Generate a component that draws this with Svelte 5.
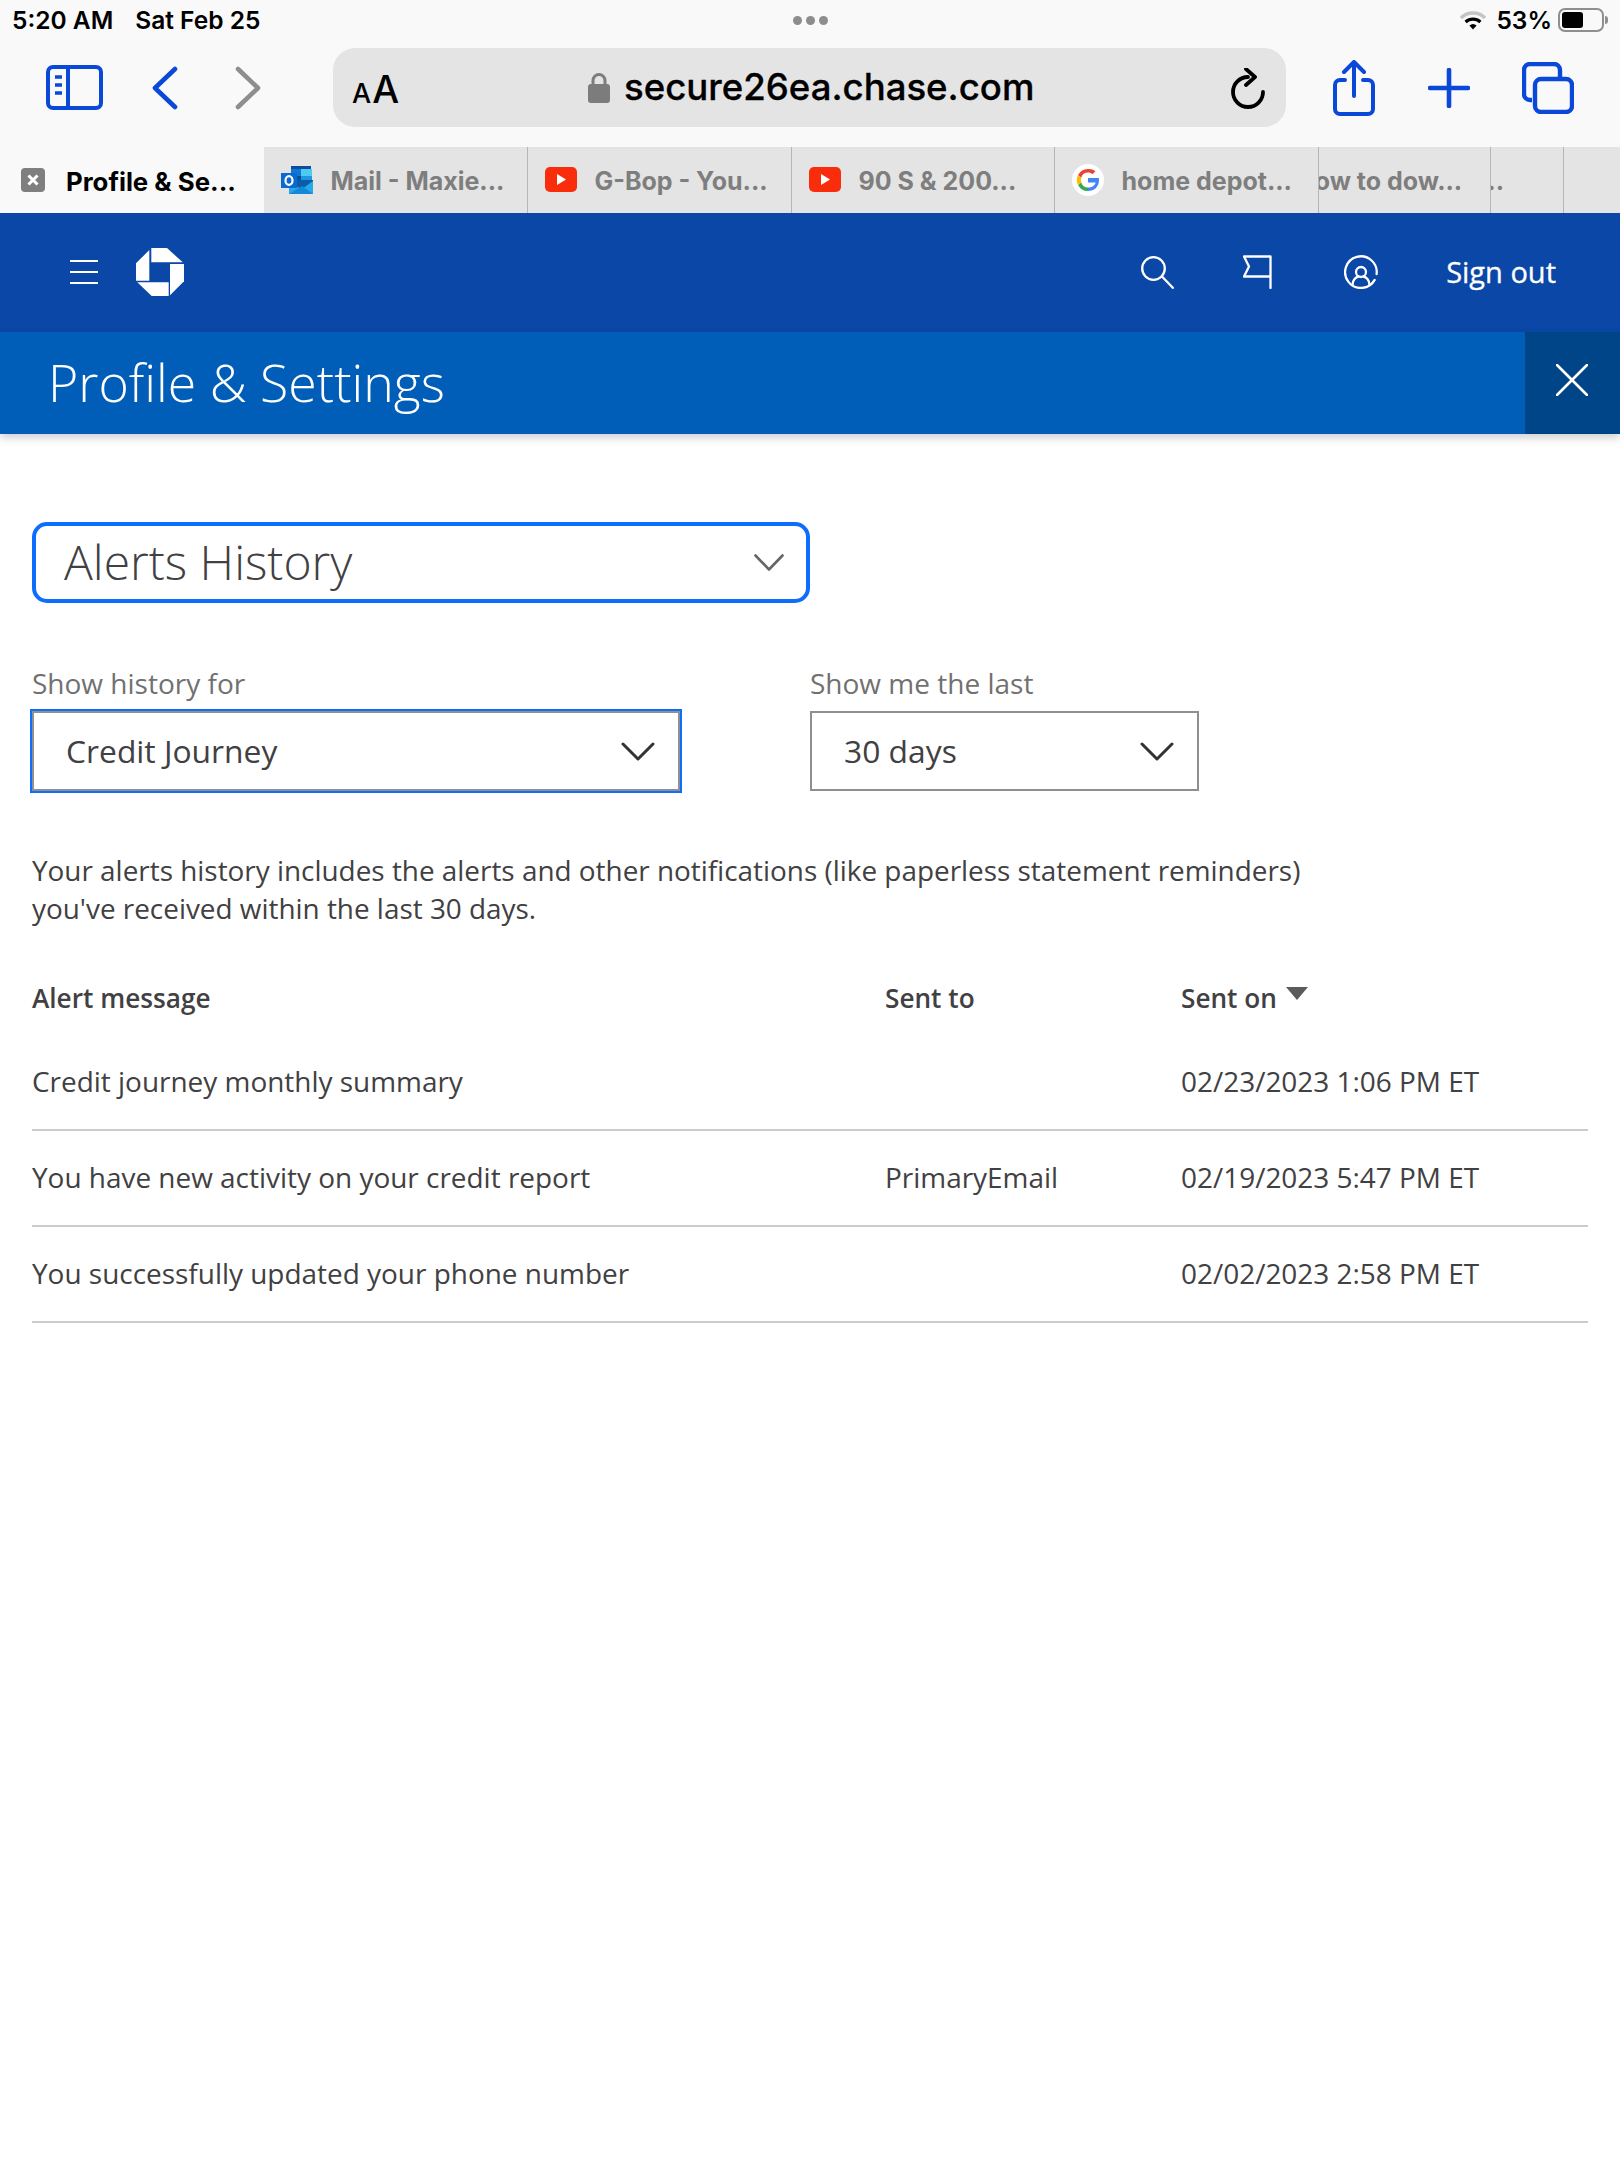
<script>
  const tabs = [
    { t: 'Mail - Maxie...', icon: 'outlook', w: 264 },
    { t: 'G-Bop - You...', icon: 'yt', w: 264 },
    { t: '90 S & 200...', icon: 'yt', w: 263 },
    { t: 'home depot...', icon: 'g', w: 264 },
  ];
  const rows = [
    ['Credit journey monthly summary', '', '02/23/2023 1:06 PM ET'],
    ['You have new activity on your credit report', 'PrimaryEmail', '02/19/2023 5:47 PM ET'],
    ['You successfully updated your phone number', '', '02/02/2023 2:58 PM ET'],
  ];
</script>

<div class="page">
  <div class="chrome">
    <div class="status">
      <span class="time">5:20 AM</span><span class="date">Sat Feb 25</span>
      <div class="dots"><i></i><i></i><i></i></div>
      <svg class="wifi" width="28" height="20" viewBox="0 0 28 20">
        <path d="M2 8a17 17 0 0 1 24 0" fill="none" stroke="#c4c4c4" stroke-width="3.4"/>
        <path d="M6.6 12a11 11 0 0 1 14.8 0" fill="none" stroke="#000" stroke-width="3.2"/>
        <path d="M10.4 15.6a5.4 5.4 0 0 1 7.2 0L14 19.6z" fill="#000"/>
      </svg>
      <span class="pct">53%</span>
      <div class="batt"><b></b></div><div class="nub"></div>
    </div>
    <div class="toolbar">
      <svg class="i-side" width="57" height="45" viewBox="0 0 57 45" fill="none" stroke="#0a49d8" stroke-width="4">
        <rect x="2" y="2" width="53" height="41" rx="5"/><path d="M22 2v41"/>
        <path d="M9 12h7M9 20h7M9 28h7" stroke-width="3.4"/>
      </svg>
      <svg class="i-back" width="26" height="44" viewBox="0 0 26 44" fill="none" stroke="#0a49d8" stroke-width="4.6" stroke-linecap="round" stroke-linejoin="round"><path d="M23 3 3 22l20 19"/></svg>
      <svg class="i-fwd" width="26" height="44" viewBox="0 0 26 44" fill="none" stroke="#8e8e8e" stroke-width="4.6" stroke-linecap="round" stroke-linejoin="round"><path d="m3 3 20 19L3 41"/></svg>
      <div class="url">
        <span class="aa"><small>A</small>A</span>
        <svg class="lock" width="22" height="30" viewBox="0 0 22 30"><rect x="0" y="11" width="22" height="19" rx="3" fill="#7c7c7c"/><path d="M5 12V7.500a6 6 0 0 1 12 0V12" fill="none" stroke="#7c7c7c" stroke-width="3"/></svg>
        <span class="host">secure26ea.chase.com</span>
        <svg class="reload" width="36" height="42" viewBox="0 0 36 42" fill="none" stroke="#000" stroke-width="3.8" stroke-linecap="round" stroke-linejoin="round"><path d="M17 9A15 15 0 1 0 32 24"/><path d="m15 1 9 8-9 8"/></svg>
      </div>
      <svg class="i-share" width="44" height="56" viewBox="0 0 44 56" fill="none" stroke="#0a49d8" stroke-width="4" stroke-linecap="round" stroke-linejoin="round"><path d="M13 20H8a5 5 0 0 0-5 5v24a5 5 0 0 0 5 5h28a5 5 0 0 0 5-5V25a5 5 0 0 0-5-5h-5"/><path d="M22 36V3M12 12l10-10 10 10"/></svg>
      <svg class="i-plus" width="42" height="40" viewBox="0 0 42 40" fill="none" stroke="#0a49d8" stroke-width="4.600" stroke-linecap="round"><path d="M21 2v36M2 20h38"/></svg>
      <svg class="i-tabs" width="52" height="52" viewBox="0 0 52 52" fill="none" stroke="#0a49d8" stroke-width="4.400"><path d="M10 38H8a6 6 0 0 1-6-6V8a6 6 0 0 1 6-6h24a6 6 0 0 1 6 6v7"/><rect x="13" y="17" width="37" height="33" rx="6"/></svg>
    </div>
    <div class="tabs">
      <div class="tab active">
        <svg width="24" height="24" viewBox="0 0 24 24"><rect width="24" height="24" rx="4" fill="#7f7f7f"/><path d="m7.500 7.500 9 9m0-9-9 9" stroke="#fff" stroke-width="3"/></svg>
        <span>Profile &amp; Se...</span>
      </div>
      {#each tabs as tab}
        <div class="tab" style="width:{tab.w}px">
          {#if tab.icon === 'outlook'}
            <svg width="32" height="28" viewBox="0 0 32 28">
              <rect x="10" y="0" width="20" height="14" fill="#0a4f9e"/><rect x="20" y="3" width="11" height="7" fill="#4fcaf5"/><rect x="10" y="3" width="10" height="7" fill="#0f78d4"/><rect x="20" y="10" width="11" height="6" fill="#1f97e0"/>
              <path d="M8 14 32 14V28H8z" fill="#0a5ea8"/><path d="M8 28V17l13 6 11-8v13z" fill="#28a8ea"/><path d="M8 28 21 20 32 28z" fill="#1488d8"/>
              <rect x="0" y="7" width="16" height="15" fill="#0a6ad1"/><ellipse cx="8" cy="14.500" rx="3.500" ry="4.300" fill="none" stroke="#fff" stroke-width="2.200"/>
            </svg>
          {:else if tab.icon === 'yt'}
            <svg width="32" height="32" viewBox="0 0 32 32"><rect y="3" width="32" height="25" rx="5" fill="#f92d0c"/><path d="m12 10 9 5.500-9 5.500z" fill="#fff"/></svg>
          {:else}
            <svg class="g" width="32" height="32" viewBox="0 0 32 32">
              <circle cx="16" cy="16" r="16" fill="#fff"/>
              <path d="M16 14v4.400h7.600c-.8 3.400-3.700 5.100-7.600 5.100v3.500c5.900 0 11-3.900 11-11 0-.7-.1-1.400-.2-2z" fill="#4285f4"/>
              <path d="M9.300 18.500A7 7 0 0 0 16 23.500V27a11 11 0 0 1-9.900-6z" fill="#34a853"/>
              <path d="M6.100 11a11 11 0 0 0 0 10l3.200-2.500a7 7 0 0 1 0-5z" fill="#fbbc05"/>
              <path d="M16 5a11 11 0 0 0-9.900 6l3.200 2.500A7 7 0 0 1 16 8.500c1.800 0 3.300.6 4.500 1.700l3-3A10.800 10.800 0 0 0 16 5z" fill="#ea4335"/>
            </svg>
          {/if}
          <span>{tab.t}</span>
        </div>
      {/each}
      <div class="tab clip c1"><span>How to dow...</span></div>
      <div class="tab clip c2"><span>...</span></div>
      <div class="tab c3"></div>
    </div>
  </div>

  <header class="nav">
    <svg class="burger" width="28" height="24" viewBox="0 0 28 24" stroke="#fff" stroke-width="2"><path d="M0 1h28M0 12h28M0 23h28"/></svg>
    <svg class="logo" width="48" height="48" viewBox="0 0 48 48" fill="#fff">
      <path d="M15.300 0H31L46.700 14.300H15.300z"/>
      <path d="M13.300 2 0 15.300V32.700H13.300z"/>
      <path d="M34 16H48V33.300L34 47.300z"/>
      <path d="M1.300 34.300H32.700V48H15.700z"/>
    </svg>
    <div class="spacer"></div>
    <svg class="n-search" width="33" height="33" viewBox="0 0 33 33" fill="none" stroke="#fff" stroke-width="2.300" stroke-linecap="round"><circle cx="12.500" cy="12.500" r="11.300"/><path d="m21 20.500 10.800 11.300"/></svg>
    <svg class="n-flag" width="29" height="34" viewBox="0 0 29 34" fill="none" stroke="#fff" stroke-width="2.300" stroke-linecap="round" stroke-linejoin="round"><path d="M27.500 33V1.500H1l5 10-5 10h26.500"/></svg>
    <svg class="n-acct" width="34" height="34" viewBox="0 0 34 34" fill="none" stroke="#fff" stroke-width="2.300" stroke-linecap="round"><path d="M30.700 24.900A15.800 15.800 0 1 1 32.600 19.200"/><circle cx="17" cy="17" r="5"/><path d="M8.500 30c0-5 3.500-8 6-8.500M25.500 30c0-5-3.500-8-6-8.500"/></svg>
    <span class="signout">Sign out</span>
  </header>

  <div class="subnav">
    <h1>Profile &amp; Settings</h1>
    <div class="close"><svg width="32" height="32" viewBox="0 0 32 32" stroke="#fff" stroke-width="2.600" stroke-linecap="round"><path d="m1 1 30 30M31 1 1 31"/></svg></div>
  </div>

  <main>
    <div class="big-select">
      <span>Alerts History</span>
      <svg width="30" height="18" viewBox="0 0 30 18" fill="none" stroke="#666" stroke-width="2.600" stroke-linecap="round" stroke-linejoin="round"><path d="m1.500 1.500 13.500 14 13.500-14"/></svg>
    </div>

    <div class="filters">
      <div class="f1">
        <label>Show history for</label>
        <div class="sel focus"><span>Credit Journey</span>
          <svg width="34" height="19" viewBox="0 0 34 19" fill="none" stroke="#333" stroke-width="3" stroke-linecap="round" stroke-linejoin="round"><path d="m2 2 15 15L32 2"/></svg>
        </div>
      </div>
      <div class="f2">
        <label>Show me the last</label>
        <div class="sel"><span>30 days</span>
          <svg width="34" height="19" viewBox="0 0 34 19" fill="none" stroke="#333" stroke-width="3" stroke-linecap="round" stroke-linejoin="round"><path d="m2 2 15 15L32 2"/></svg>
        </div>
      </div>
    </div>

    <p>Your alerts history includes the alerts and other notifications (like paperless statement reminders)<br/>you've received within the last 30 days.</p>

    <div class="thead">
      <span class="c-msg">Alert message</span>
      <span class="c-to">Sent to</span>
      <span class="c-on">Sent on <i class="tri"></i></span>
    </div>
    {#each rows as r}
      <div class="row">
        <span class="c-msg">{r[0]}</span>
        <span class="c-to">{r[1]}</span>
        <span class="c-on">{r[2]}</span>
      </div>
    {/each}
  </main>
</div>

<style>
  :global(body) { margin: 0; background: #fff; }
  .page { width: 1620px; height: 2160px; overflow: hidden; font-family: "Open Sans", sans-serif; color: #414042; }

  .chrome { background: #f9f9f9; height: 213px; font-family: Inter, "Liberation Sans", sans-serif; color: #000; }
  .status { height: 40px; display: flex; align-items: center; position: relative; font-size: 24.5px; font-weight: 600; padding: 0 12px 0 12px; box-sizing: border-box; }
  .date { margin-left: 22px; }
  .dots { position: absolute; left: 793px; top: 16px; display: flex; gap: 4px; }
  .dots i { width: 9px; height: 9px; border-radius: 50%; background: #8d8d8d; display: block; }
  .wifi { margin-left: auto; }
  .pct { margin-left: 9px; }
  .batt { margin-left: 6px; width: 46px; height: 24px; border: 2px solid #8f8f8f; border-radius: 7px; box-sizing: border-box; padding: 2px; }
  .batt b { display: block; height: 100%; width: 21px; background: #000; border-radius: 3px; }
  .nub { width: 3px; height: 8px; background: #8f8f8f; border-radius: 0 3px 3px 0; margin-left: 1px; }

  .toolbar { height: 95px; margin-bottom: 12px; display: flex; align-items: center; position: relative; }
  .toolbar > svg { flex: none; }
  .i-side { margin-left: 46px; }
  .i-back { margin-left: 49px; }
  .i-fwd { margin-left: 57px; }
  .url { margin-left: 72px; width: 953px; height: 79px; background: #e4e4e4; border-radius: 22px; display: flex; align-items: center; position: relative; }
  .aa { position: absolute; left: 19px; top: 22px; font-size: 38px; line-height: 38px; font-weight: 500; }
  .aa small { font-size: 27px; margin-right: 1px; }
  .lock { position: absolute; left: 255px; top: 25px; }
  .host { position: absolute; left: 291px; top: 17px; font-size: 36.6px; line-height: 44px; font-weight: 500; white-space: nowrap; -webkit-text-stroke: .3px #000; }
  .reload { position: absolute; left: 898px; top: 20px; }
  .i-share { margin-left: 46px; }
  .i-plus { margin-left: 52px; }
  .i-tabs { margin-left: 52px; }

  .tabs { height: 66px; display: flex; }
  .tab { box-sizing: border-box; height: 66px; background: #e4e4e4; border-right: 1px solid #b5b5b5; display: flex; align-items: center; padding-left: 17px; gap: 17.5px; font-size: 25px; font-weight: 700; color: #7e7e7e; overflow: hidden; white-space: nowrap; flex: none; }
  .tab svg { flex: none; }
  .tab span { padding-top: 2px; }
  .tab.active { width: 264px; background: #f9f9f9; color: #000; border-right: 0; padding-left: 21px; gap: 21px; font-size: 25.800px; }
  .clip { padding-left: 0; }
  .c1 { width: 172px; }
  .c1 span { margin-left: -23px; }
  .c2 { width: 73px; }
  .c2 span { margin-left: -12px; }
  .c3 { flex: 1; border-right: 0; }

  .nav { height: 119px; background: #0a47a6; display: flex; align-items: center; color: #fff; }
  .burger { margin-left: 70px; margin-top: -1px; }
  .logo { margin-left: 38px; margin-top: -1px; }
  .spacer { flex: 1; }
  .n-search { margin-top: -1px; }
  .n-flag { margin-left: 69px; margin-top: -1px; }
  .n-acct { margin-left: 72px; margin-top: -1px; }
  .signout { margin-left: 68px; margin-right: 64px; font-size: 29px; font-weight: 500; margin-top: -2px; -webkit-text-stroke: .3px #fff; }

  .subnav { height: 102px; background: #005eb8; display: flex; align-items: stretch; position: relative; box-shadow: 0 4px 8px rgba(0,0,0,.18); }
  h1 { margin: 0; flex: 1; padding-left: 48px; font-size: 51.8px; line-height: 100px; font-weight: 300; color: #fff; }
  .close { width: 95px; background: #004587; display: flex; align-items: center; justify-content: center; }
  .close svg { margin-top: -6px; margin-left: -2px; }

  main { padding: 88px 32px 0; }
  .big-select { box-sizing: border-box; width: 778px; height: 81px; border: 4px solid #0d6efd; border-radius: 15px; display: flex; align-items: center; justify-content: space-between; padding: 0 22px 0 28px; font-size: 48px; font-weight: 300; color: #414042; }
  .big-select span { margin-top: -2px; }

  .filters { display: flex; margin-top: 60px; }
  .f1 { width: 778px; }
  label { display: block; font-size: 28px; font-weight: 400; line-height: 40px; color: #717171; height: 48px; }
  .sel { box-sizing: border-box; height: 80px; border: 2px solid #8f8f8f; display: flex; align-items: center; justify-content: space-between; font-size: 31.8px; color: #414042; }
  .sel span { margin-top: -2px; }
  .f1 .sel { width: 648px; padding: 0 23px 0 32px; outline: 2px solid #0d6efd; }
  .f2 .sel { width: 389px; padding: 0 23px 0 32px; }

  p { margin: 60px 0 0; font-size: 27.9px; line-height: 38px; color: #414042; }

  .thead, .row { display: flex; width: 1556px; }
  .thead { margin-top: 36px; height: 72px; padding-bottom: 2px; box-sizing: border-box; align-items: center; font-size: 26.200px; font-weight: 600; color: #414042; }
  .row { height: 96px; box-sizing: border-box; border-bottom: 2px solid #cbcbcb; padding-bottom: 2px; align-items: center; font-size: 27.95px; }
  .c-msg { width: 853px; }
  .c-to { width: 296px; }
  .tri { display: inline-block; width: 0; height: 0; border-left: 11.5px solid transparent; border-right: 11.5px solid transparent; border-top: 13px solid #5b5b5b; vertical-align: 8px; margin-left: 2px; }
</style>
